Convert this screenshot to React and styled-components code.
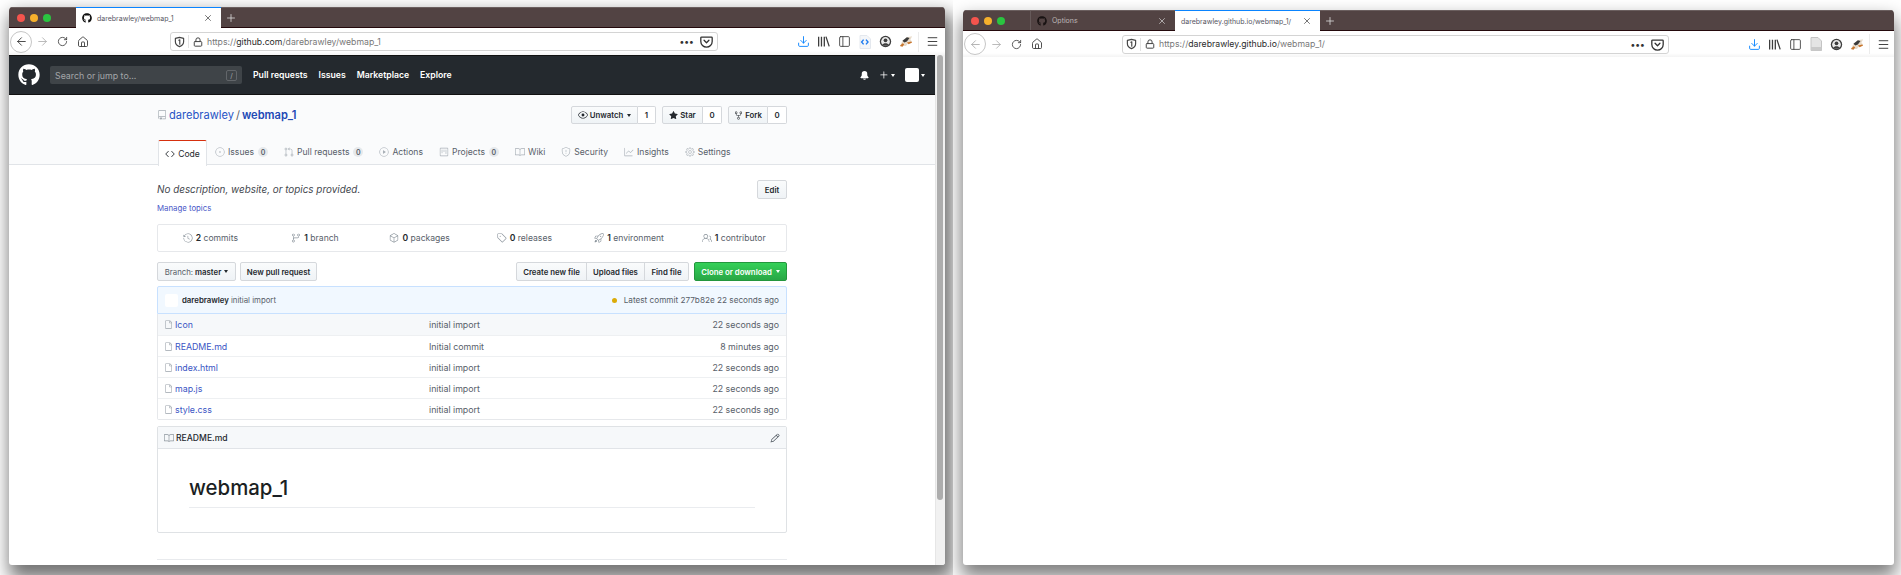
import styled, { createGlobalStyle } from "styled-components";
import { ArrowLeft, ArrowRight, RotateCw, Home, Lock, X, Plus, PanelLeft, Menu, Download } from "lucide-react";
import { FaGithub } from "react-icons/fa";
import {
  GoRepo, GoCode, GoIssueOpened, GoGitPullRequest, GoPlay, GoProject, GoBook, GoShield, GoGraph, GoGear,
  GoEye, GoStarFill, GoRepoForked, GoHistory, GoGitBranch, GoPackage, GoTag, GoRocket, GoPeople, GoFile,
  GoBellFill, GoPlus, GoPencil,
} from "react-icons/go";

const GlobalStyle = createGlobalStyle`
  html, body { margin: 0; padding: 0; background: #fff; overflow: hidden; }
  * { box-sizing: border-box; }
  body { font-family: Inter, "Liberation Sans", sans-serif; color: #24292e; }
`;

const Desktop = styled.div`
  display: flex;
  width: 1901px;
  height: 575px;
`;

const Screen = styled.div`
  width: ${(p) => p.$width}px;
  height: 575px;
  padding: ${(p) => p.$top}px 0 0 ${(p) => p.$left}px;
  overflow: hidden;
  background: #fff;
`;

const Win = styled.div`
  display: flex;
  flex-direction: column;
  width: ${(p) => p.$width}px;
  height: ${(p) => p.$height}px;
  border-radius: 4px 4px 3px 3px;
  overflow: hidden;
  background: #fff;
  box-shadow: ${(p) => p.$shadow};
`;

const TabStrip = styled.div`
  display: flex;
  flex: none;
  height: 21px;
  background: #524343;
  border-top: 1px solid #6b5f5f;
  border-bottom: 1px solid #24090c;
`;

const Lights = styled.div`
  display: flex;
  align-items: center;
  gap: 5px;
  width: 67px;
  padding-left: 8px;
`;

const Light = styled.span`
  width: 8px;
  height: 8px;
  border-radius: 50%;
  background: ${(p) => p.$color};
`;

const Tab = styled.div`
  display: flex;
  align-items: center;
  width: 145px;
  height: ${(p) => (p.$active ? "21px" : "19px")};
  margin-top: ${(p) => (p.$active ? "-1px" : "0")};
  padding: 0 8px 0 6px;
  font-size: 7px;
  color: ${(p) => (p.$active ? "#55555f" : "#bdb6b6")};
  background: ${(p) => (p.$active ? "#fff" : "transparent")};
  border-top: ${(p) => (p.$active ? "1.5px solid #0a84ff" : "none")};
  border-left: ${(p) => (p.$active ? "none" : "1px solid #665a5a")};
  svg.close { margin-left: auto; color: ${(p) => (p.$active ? "#333" : "#ddd")}; }
  svg.favicon { margin-right: 5px; flex: none; color: ${(p) => (p.$active ? "#111" : "#191313")}; }
`;

const NewTab = styled.div`
  display: flex;
  align-items: center;
  justify-content: center;
  width: 20px;
  color: #ddd;
`;

const Toolbar = styled.div`
  display: flex;
  flex: none;
  align-items: center;
  height: ${(p) => p.$height}px;
  background: linear-gradient(#fff, #fff 85%, #f4f4f4);
  color: #333;
`;

const NavGroup = styled.div`
  display: flex;
  align-items: center;
  flex: none;
  width: ${(p) => p.$width}px;
  padding-left: 1px;
`;

const BackCircle = styled.div`
  display: flex;
  align-items: center;
  justify-content: center;
  width: 22px;
  height: 22px;
  border: 1px solid #c6c6c6;
  border-radius: 50%;
  background: #fff;
  color: ${(p) => (p.$dim ? "#aaa" : "#333")};
`;

const Slot = styled.div`
  display: flex;
  flex: none;
  align-items: center;
  justify-content: center;
  width: 20.6px;
  color: ${(p) => p.$color || "#3d3d3d"};
`;

const UrlBar = styled.div`
  display: flex;
  flex: none;
  align-items: center;
  width: ${(p) => p.$width}px;
  height: 19px;
  background: #fff;
  border: 1px solid #d4d4d4;
  border-radius: 3px;
  font-size: 8.7px;
  color: #777;
  white-space: nowrap;
`;

const UrlShield = styled.span`
  display: flex;
  justify-content: center;
  width: 17px;
  color: #444;
`;

const UrlSep = styled.span`
  width: 1px;
  height: 13px;
  background: #e2e2e2;
`;

const UrlLock = styled.span`
  display: flex;
  justify-content: center;
  width: 17px;
  color: #444;
`;

const UrlText = styled.span`
  margin-left: 1px;
  b { font-weight: 400; color: #2a2a2a; }
`;

const UrlEnd = styled.span`
  display: flex;
  align-items: center;
  gap: 6px;
  margin-left: auto;
  padding-right: 4px;
  color: #333;
`;

const Dots = styled.span`
  font-size: 9px;
  font-weight: 700;
  letter-spacing: 0.5px;
  color: #333;
`;

const Actions = styled.div`
  display: flex;
  flex: 1;
  align-items: center;
  padding-left: 75px;
`;

const ActionSep = styled.span`
  width: 1px;
  height: 20px;
  margin-left: 1px;
  background: #ececec;
`;

const MenuSlot = styled.div`
  display: flex;
  justify-content: center;
  width: 28px;
  color: #333;
`;

const Body = styled.div`
  display: flex;
  flex: 1;
  min-height: 0;
`;

const Page = styled.div`
  flex: 1;
  min-width: 0;
  overflow: hidden;
`;

const Track = styled.div`
  flex: none;
  width: 10px;
  padding: 0 2px 0 1px;
  background: #f1f1f1;
  border-left: 1px solid #e6e6e6;
`;

const Thumb = styled.div`
  width: 6px;
  height: 445px;
  border-radius: 3px;
  background: #adadad;
`;

const Header = styled.div`
  display: flex;
  align-items: center;
  height: 40px;
  padding: 0 10px 0 9px;
  background: #24292e;
  border-top: 1px solid #111;
  border-bottom: 1px solid #111;
  color: #fff;
`;

const SearchBox = styled.div`
  display: flex;
  align-items: center;
  justify-content: space-between;
  width: 192px;
  height: 18px;
  margin: 0 11px 0 10px;
  padding: 0 5px;
  background: #3f4448;
  border-radius: 2px;
  font-size: 8.8px;
  color: #a3a6a9;
`;

const SlashKey = styled.span`
  display: flex;
  align-items: center;
  justify-content: center;
  width: 11px;
  height: 11px;
  border: 1px solid #62666a;
  border-radius: 2px;
  font-size: 7px;
`;

const HeaderLink = styled.span`
  margin-right: 11px;
  font-size: 8.7px;
  font-weight: 600;
`;

const HeaderRight = styled.div`
  display: flex;
  align-items: center;
  gap: 8px;
  margin-left: auto;
`;

const PlusMenu = styled.span`
  display: flex;
  align-items: center;
`;

const Caret = styled.span`
  width: 0;
  height: 0;
  margin-left: ${(p) => p.$gap ?? 2}px;
  border: 2.5px solid transparent;
  border-top: 3px solid ${(p) => p.$color || "#fff"};
  border-bottom: 0;
`;

const AvatarSquare = styled.span`
  width: 14px;
  height: 14px;
  margin-left: 2px;
  background: #fff;
  border-radius: 2px;
`;

const RepoHead = styled.div`
  height: 70px;
  background: #fafbfc;
  border-bottom: 1px solid #e1e4e8;
`;

const Container = styled.div`
  width: 630px;
  margin-left: 148px;
`;

const TitleRow = styled.div`
  display: flex;
  align-items: center;
  justify-content: space-between;
  height: 44px;
  padding-bottom: 4px;
`;

const RepoTitle = styled.div`
  display: flex;
  align-items: center;
  gap: 2px;
  font-size: 11.1px;
  color: #586069;
  white-space: nowrap;
  span { color: #2754c5; }
  b { font-weight: 600; color: #2148b5; }
`;

const Counters = styled.div`
  display: flex;
  gap: 6px;
`;

const Pair = styled.div`
  display: flex;
  height: 18px;
  font-size: 7.8px;
  font-weight: 600;
`;

const PairBtn = styled.div`
  display: flex;
  align-items: center;
  justify-content: center;
  gap: 2px;
  width: ${(p) => p.$width}px;
  background: linear-gradient(#fafbfc, #eff3f6);
  border: 1px solid #d5d8dc;
  border-radius: 2px 0 0 2px;
`;

const PairCount = styled.div`
  display: flex;
  align-items: center;
  justify-content: center;
  width: ${(p) => p.$width}px;
  background: #fff;
  border: 1px solid #d5d8dc;
  border-left: 0;
  border-radius: 0 2px 2px 0;
`;

const TabRow = styled.div`
  display: flex;
  align-items: flex-end;
  height: 26px;
  margin-left: 1px;
  font-size: 8.6px;
  color: #586069;
`;

const CodeTab = styled.div`
  display: flex;
  align-items: center;
  justify-content: center;
  gap: 3px;
  width: 49px;
  height: 26px;
  margin-bottom: -1px;
  color: #24292e;
  background: #fff;
  border: 1px solid #e1e4e8;
  border-top: 1.5px solid #d6300e;
  border-bottom: 0;
  border-radius: 2px 2px 0 0;
`;

const RepoTab = styled.div`
  display: flex;
  align-items: center;
  gap: 3px;
  height: 26px;
  padding: 0 8px;
  white-space: nowrap;
  svg { color: #a9b0b7; }
`;

const Badge = styled.span`
  display: flex;
  align-items: center;
  justify-content: center;
  width: 10px;
  height: 10px;
  margin-left: 1px;
  border-radius: 50%;
  background: #e6e9ec;
  font-size: 7px;
  font-weight: 600;
  color: #586069;
`;

const AboutRow = styled.div`
  display: flex;
  align-items: flex-start;
  justify-content: space-between;
  padding-top: 15px;
`;

const Description = styled.div`
  margin-top: 2px;
  font-size: 9.9px;
  font-style: italic;
  line-height: 14px;
  color: #3f464d;
`;

const TopicsLink = styled.div`
  margin-top: 7px;
  font-size: 7.8px;
  line-height: 10px;
  color: #4a58c8;
`;

const Button = styled.div`
  display: flex;
  align-items: center;
  justify-content: center;
  height: 19px;
  width: ${(p) => p.$width}px;
  background: linear-gradient(#fafbfc, #eff3f6);
  border: 1px solid #d5d8dc;
  border-radius: 2px;
  font-size: 7.8px;
  font-weight: 600;
  white-space: nowrap;
`;

const Stats = styled.div`
  display: grid;
  grid-template-columns: repeat(6, 1fr);
  height: 28px;
  margin-top: 11px;
  border: 1px solid #e6e8eb;
  border-radius: 2px;
  font-size: 8.6px;
  color: #586069;
`;

const Stat = styled.div`
  display: flex;
  align-items: center;
  justify-content: center;
  gap: 3px;
  white-space: nowrap;
  svg { color: #8b949c; }
  b { font-weight: 600; color: #24292e; }
`;

const BranchRow = styled.div`
  display: flex;
  align-items: center;
  gap: 4px;
  margin-top: 10px;
`;

const BranchLabel = styled.span`
  font-weight: 400;
  color: #586069;
  margin-right: 2px;
`;

const FileGroup = styled.div`
  display: flex;
  margin-left: auto;
  & > div { border-radius: 0; margin-left: -1px; }
  & > div:first-child { border-radius: 2px 0 0 2px; }
  & > div:last-child { border-radius: 0 2px 2px 0; }
`;

const CloneButton = styled(Button)`
  gap: 2px;
  margin-left: 1px;
  color: #fff;
  background: linear-gradient(#34d058, #28a745);
  border-color: #23963d;
`;

const CommitBar = styled.div`
  display: flex;
  align-items: center;
  height: 28px;
  margin-top: 5px;
  padding: 0 7px;
  background: #f1f8ff;
  border: 1px solid #c8e1ff;
  border-radius: 2px 2px 0 0;
  font-size: 7.8px;
  color: #586069;
  b { font-weight: 600; color: #24292e; margin-right: 2px; }
`;

const CommitAvatar = styled.span`
  width: 13px;
  height: 13px;
  margin-right: 4px;
  background: #fff;
  border-radius: 2px;
`;

const CommitMeta = styled.div`
  display: flex;
  align-items: center;
  margin-left: auto;
  font-size: 8.2px;
`;

const StatusDot = styled.span`
  width: 5px;
  height: 5px;
  margin-right: 7px;
  border-radius: 50%;
  background: #dbab09;
`;

const FileList = styled.div`
  border: 1px solid #e6e8eb;
  border-top: 0;
  border-radius: 0 0 2px 2px;
`;

const FileRow = styled.div`
  display: grid;
  grid-template-columns: 265px 1fr auto;
  align-items: center;
  height: 21px;
  padding: 0 7px 0 6px;
  font-size: 8.8px;
  color: #586069;
  background: ${(p) => (p.$hover ? "#f6f8fa" : "#fff")};
  border-top: ${(p) => (p.$first ? "none" : "1px solid #eef0f2")};
`;

const FileName = styled.div`
  display: flex;
  align-items: center;
  gap: 2px;
  color: #3a55c4;
  svg { color: #9aa2aa; }
`;

const Readme = styled.div`
  height: 107px;
  margin-top: 6px;
  border: 1px solid #dfe2e5;
  border-radius: 2px;
`;

const ReadmeHead = styled.div`
  display: flex;
  align-items: center;
  justify-content: space-between;
  height: 22px;
  padding: 0 6px;
  background: #f6f8fa;
  border-bottom: 1px solid #e1e4e8;
  font-size: 8.6px;
  font-weight: 500;
`;

const ReadmeTitle = styled.span`
  display: flex;
  align-items: center;
  gap: 2px;
  svg { color: #8b949c; }
`;

const ReadmeBody = styled.div`
  padding: 24px 31px 0;
`;

const Heading = styled.h1`
  margin: 0;
  padding-bottom: 4px;
  font-size: 20.4px;
  font-weight: 500;
  line-height: 30px;
  color: #1b1f23;
  border-bottom: 1px solid #eaecef;
`;

const FootRule = styled.div`
  height: 1px;
  margin-top: 26px;
  background: #e8eaed;
`;

function TrackerShield() {
  return (
    <svg width="11" height="12" viewBox="0 0 16 16" fill="none" stroke="currentColor" strokeWidth="1.7" strokeLinejoin="round">
      <path d="M8 1.2l6 1.6v5c0 3.4-2.6 5.8-6 7-3.4-1.2-6-3.6-6-7v-5z" />
      <path d="M7 5.4l1.4-.6v6.4" strokeLinecap="round" />
    </svg>
  );
}

function Pocket() {
  return (
    <svg width="13" height="13" viewBox="0 0 16 16" fill="none" stroke="currentColor" strokeWidth="1.6" strokeLinejoin="round" strokeLinecap="round">
      <path d="M2 2.5h12a1 1 0 0 1 1 1V8a7 7 0 0 1-14 0V3.5a1 1 0 0 1 1-1z" />
      <path d="M5 6.5l3 3 3-3" />
    </svg>
  );
}

function Library() {
  return (
    <svg width="13" height="13" viewBox="0 0 16 16" stroke="currentColor" strokeWidth="1.6" fill="none">
      <path d="M2 2v12M5.5 2v12M9 2v12M11 2l4 12" />
    </svg>
  );
}

function Account() {
  return (
    <svg width="13" height="13" viewBox="0 0 16 16">
      <circle cx="8" cy="8" r="7" fill="#3d3d3d" />
      <circle cx="8" cy="8" r="5.4" fill="#e8e8e8" />
      <circle cx="8" cy="6.6" r="2.3" fill="#3d3d3d" />
      <path d="M4 12c1-2.6 7-2.6 8 0-1.6 1.6-6.4 1.6-8 0z" fill="#3d3d3d" />
    </svg>
  );
}

function Fox() {
  return (
    <svg width="14" height="13" viewBox="0 0 16 14">
      <path d="M1 12l3-6 5-4 6-1-2 4 2 2-4 1-3 4z" fill="#e9dccb" />
      <path d="M4 6l5-4 3 1-3 4-3 1z" fill="#3a3a3a" />
      <path d="M9 8l5-1 1 1-4 2zM1 12l3-3 2 1-2 3z" fill="#c8762e" />
    </svg>
  );
}

function ExtIcon({ live }) {
  return (
    <svg width="12" height="14" viewBox="0 0 12 14">
      <path d="M1 .5h7l3.5 3.5v9.5H1z" fill={live ? "#f4f6f9" : "#e4e4e4"} stroke={live ? "#e4e8ee" : "#c4c4c4"} />
      {live ? (
        <path d="M4.6 4.6L2.6 7l2 2.4M7 4.6L9 7 7 9.4" fill="none" stroke="#1f7cf0" strokeWidth="1.4" />
      ) : (
        <path d="M1 10h10.5v3.5H1z" fill="#c9c9c9" />
      )}
    </svg>
  );
}

function Chrome({ tabs, toolbarHeight, navWidth, urlWidth, dimBack, liveExt, children }) {
  return (
    <>
      <TabStrip>
        <Lights>
          <Light $color="#f4544d" />
          <Light $color="#f6b02c" />
          <Light $color="#2ac440" />
        </Lights>
        {tabs.map((t) => (
          <Tab key={t.label} $active={t.active}>
            {t.icon && <FaGithub className="favicon" size={10} />}
            {t.label}
            <X className="close" size={10} strokeWidth={1.6} />
          </Tab>
        ))}
        <NewTab>
          <Plus size={12} strokeWidth={1.6} />
        </NewTab>
      </TabStrip>
      <Toolbar $height={toolbarHeight}>
        <NavGroup $width={navWidth}>
          <BackCircle $dim={dimBack}>
            <ArrowLeft size={13} strokeWidth={1.6} />
          </BackCircle>
          <Slot $color="#b0b0b0"><ArrowRight size={13} strokeWidth={1.6} /></Slot>
          <Slot><RotateCw size={11} strokeWidth={1.8} /></Slot>
          <Slot><Home size={12} strokeWidth={1.8} /></Slot>
        </NavGroup>
        <UrlBar $width={urlWidth}>
          <UrlShield><TrackerShield /></UrlShield>
          <UrlSep />
          <UrlLock><Lock size={10} strokeWidth={2.4} /></UrlLock>
          <UrlText>{children}</UrlText>
          <UrlEnd>
            <Dots>•••</Dots>
            <Pocket />
          </UrlEnd>
        </UrlBar>
        <Actions>
          <Slot $color="#0a84ff"><Download size={13} strokeWidth={1.7} /></Slot>
          <Slot><Library /></Slot>
          <Slot><PanelLeft size={13} strokeWidth={1.6} /></Slot>
          <Slot><ExtIcon live={liveExt} /></Slot>
          <Slot><Account /></Slot>
          <Slot><Fox /></Slot>
          <ActionSep />
          <MenuSlot><Menu size={13} strokeWidth={1.7} /></MenuSlot>
        </Actions>
      </Toolbar>
    </>
  );
}

const repoTabs = [
  { label: "Issues", Icon: GoIssueOpened, count: 0 },
  { label: "Pull requests", Icon: GoGitPullRequest, count: 0 },
  { label: "Actions", Icon: GoPlay },
  { label: "Projects", Icon: GoProject, count: 0 },
  { label: "Wiki", Icon: GoBook },
  { label: "Security", Icon: GoShield },
  { label: "Insights", Icon: GoGraph },
  { label: "Settings", Icon: GoGear },
];

const stats = [
  { n: 2, label: "commits", Icon: GoHistory },
  { n: 1, label: "branch", Icon: GoGitBranch },
  { n: 0, label: "packages", Icon: GoPackage },
  { n: 0, label: "releases", Icon: GoTag },
  { n: 1, label: "environment", Icon: GoRocket },
  { n: 1, label: "contributor", Icon: GoPeople },
];

const files = [
  { name: "Icon", message: "initial import", age: "22 seconds ago" },
  { name: "README.md", message: "Initial commit", age: "8 minutes ago" },
  { name: "index.html", message: "initial import", age: "22 seconds ago" },
  { name: "map.js", message: "initial import", age: "22 seconds ago" },
  { name: "style.css", message: "initial import", age: "22 seconds ago" },
];

function GithubPage() {
  return (
    <Page>
      <Header>
        <FaGithub size={22} />
        <SearchBox>
          Search or jump to...
          <SlashKey>/</SlashKey>
        </SearchBox>
        <HeaderLink>Pull requests</HeaderLink>
        <HeaderLink>Issues</HeaderLink>
        <HeaderLink>Marketplace</HeaderLink>
        <HeaderLink>Explore</HeaderLink>
        <HeaderRight>
          <GoBellFill size={11} />
          <PlusMenu>
            <GoPlus size={12} />
            <Caret $gap={1} />
          </PlusMenu>
          <PlusMenu>
            <AvatarSquare />
            <Caret $gap={2} />
          </PlusMenu>
        </HeaderRight>
      </Header>
      <RepoHead>
        <Container>
          <TitleRow>
            <RepoTitle>
              <GoRepo size={10} color="#a3aab1" />
              <span>darebrawley</span> / <b>webmap_1</b>
            </RepoTitle>
            <Counters>
              <Pair>
                <PairBtn $width={67}><GoEye size={10} /> Unwatch <Caret $color="#24292e" /></PairBtn>
                <PairCount $width={18}>1</PairCount>
              </Pair>
              <Pair>
                <PairBtn $width={41}><GoStarFill size={9} /> Star</PairBtn>
                <PairCount $width={19}>0</PairCount>
              </Pair>
              <Pair>
                <PairBtn $width={40}><GoRepoForked size={9} /> Fork</PairBtn>
                <PairCount $width={19}>0</PairCount>
              </Pair>
            </Counters>
          </TitleRow>
          <TabRow>
            <CodeTab><GoCode size={10} /> Code</CodeTab>
            {repoTabs.map(({ label, Icon, count }) => (
              <RepoTab key={label}>
                <Icon size={10} />
                {label}
                {count !== undefined && <Badge>{count}</Badge>}
              </RepoTab>
            ))}
          </TabRow>
        </Container>
      </RepoHead>
      <Container>
        <AboutRow>
          <div>
            <Description>No description, website, or topics provided.</Description>
            <TopicsLink>Manage topics</TopicsLink>
          </div>
          <Button $width={30}>Edit</Button>
        </AboutRow>
        <Stats>
          {stats.map(({ n, label, Icon }) => (
            <Stat key={label}>
              <Icon size={10} />
              <span><b>{n}</b> {label}</span>
            </Stat>
          ))}
        </Stats>
        <BranchRow>
          <Button $width={79}>
            <BranchLabel>Branch:</BranchLabel> master <Caret $color="#24292e" $gap={3} />
          </Button>
          <Button $width={77}>New pull request</Button>
          <FileGroup>
            <Button $width={71}>Create new file</Button>
            <Button $width={59}>Upload files</Button>
            <Button $width={45}>Find file</Button>
          </FileGroup>
          <CloneButton $width={93}>Clone or download <Caret /></CloneButton>
        </BranchRow>
        <CommitBar>
          <CommitAvatar />
          <b>darebrawley</b> initial import
          <CommitMeta>
            <StatusDot />
            Latest commit 277b82e 22 seconds ago
          </CommitMeta>
        </CommitBar>
        <FileList>
          {files.map((f, i) => (
            <FileRow key={f.name} $first={i === 0} $hover={i === 0}>
              <FileName>
                <GoFile size={9} />
                {f.name}
              </FileName>
              <span>{f.message}</span>
              <span>{f.age}</span>
            </FileRow>
          ))}
        </FileList>
        <Readme>
          <ReadmeHead>
            <ReadmeTitle><GoBook size={10} /> README.md</ReadmeTitle>
            <GoPencil size={10} color="#444d56" />
          </ReadmeHead>
          <ReadmeBody>
            <Heading>webmap_1</Heading>
          </ReadmeBody>
        </Readme>
        <FootRule />
      </Container>
    </Page>
  );
}

export default function App() {
  return (
    <Desktop>
      <GlobalStyle />
      <Screen $width={953} $top={7} $left={9}>
        <Win $width={936} $height={558} $shadow="4px 10px 18px 4px rgba(0, 0, 0, 0.55)">
          <Chrome
            tabs={[{ label: "darebrawley/webmap_1", icon: true, active: true }]}
            toolbarHeight={27}
            navWidth={161}
            urlWidth={548}
            liveExt
          >
            https://<b>github.com</b>/darebrawley/webmap_1
          </Chrome>
          <Body>
            <GithubPage />
            <Track><Thumb /></Track>
          </Body>
        </Win>
      </Screen>
      <Screen $width={948} $top={10} $left={10}>
        <Win $width={931} $height={555} $shadow="0 10px 18px 2px rgba(0, 0, 0, 0.5)">
          <Chrome
            tabs={[
              { label: "Options", icon: true },
              { label: "darebrawley.github.io/webmap_1/", active: true },
            ]}
            toolbarHeight={26}
            navWidth={159}
            urlWidth={547}
            dimBack
          >
            https://<b>darebrawley.github.io</b>/webmap_1/
          </Chrome>
        </Win>
      </Screen>
    </Desktop>
  );
}
